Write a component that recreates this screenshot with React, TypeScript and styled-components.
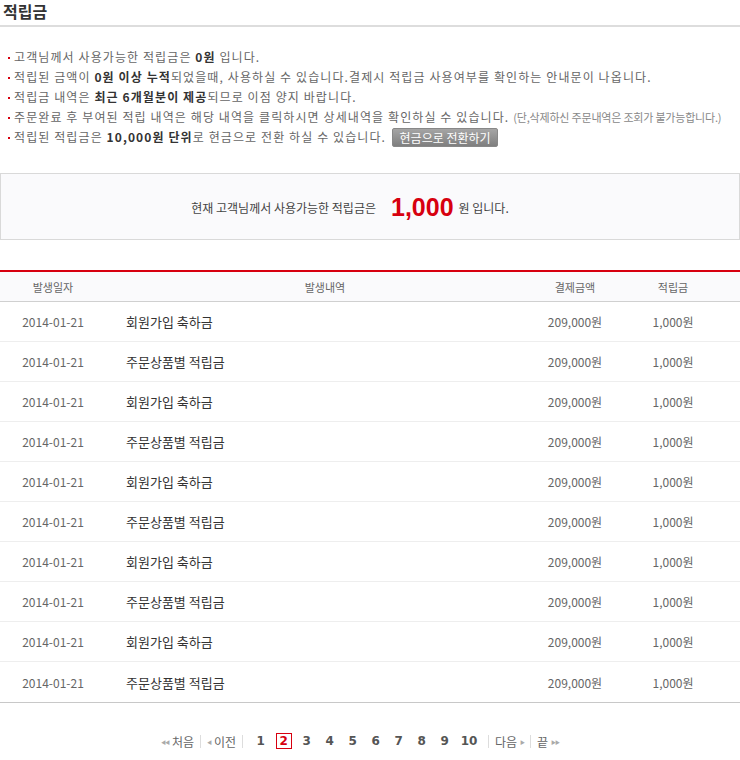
import React from "react";
import styled, { createGlobalStyle } from "styled-components";

const Global = createGlobalStyle`
  html, body { margin: 0; padding: 0; background: #fff; }
  body { font-family: "Noto Sans CJK KR", "Noto Sans", sans-serif; color: #666; }
`;

const Page = styled.div`
  width: 740px;
`;

const Title = styled.h2`
  margin: 0;
  padding: 0 3px;
  height: 25px;
  line-height: 22px;
  font-size: 16px;
  font-weight: 700;
  color: #333;
  border-bottom: 2px solid #ddd;
`;

const Notice = styled.ul`
  list-style: none;
  margin: 20px 0 0;
  padding: 0;
`;

const NoticeItem = styled.li`
  position: relative;
  padding-left: 14px;
  height: 20px;
  line-height: 20px;
  font-size: 12px;
  letter-spacing: 1.1px;
  color: #666;
  white-space: nowrap;
  display: flex;
  align-items: center;
  &::before {
    content: "";
    position: absolute;
    left: 8px;
    top: 10px;
    width: 2px;
    height: 2px;
    background: #d7000f;
  }
  b { color: #333; font-weight: 700; }
`;

const Small = styled.span`
  font-size: 11px;
  letter-spacing: -0.2px;
  margin-left: 4px;
  color: #888;
`;

const ConvertButton = styled.button`
  margin-left: 6px;
  height: 19px;
  width: 106px;
  padding: 0;
  border: 1px solid #888;
  border-radius: 2px;
  background: linear-gradient(#a5a5a5, #7f7f7f);
  color: #fff;
  font-family: inherit;
  font-size: 12px;
  letter-spacing: 0;
  line-height: 17px;
  cursor: pointer;
`;

const Summary = styled.div`
  margin-top: 26px;
  height: 63px;
  padding: 2px 40px 0 0;
  border: 1px solid #d9d9d9;
  background: #fafafc;
  display: flex;
  align-items: center;
  justify-content: center;
  font-size: 12px;
  color: #444;
`;

const Points = styled.strong`
  font-size: 25px;
  font-weight: 700;
  color: #d7000f;
  margin: 0 5px 0 15px;
  letter-spacing: 0;
  font-family: "Liberation Sans", "Noto Sans", sans-serif;
`;

const Table = styled.div`
  margin-top: 30px;
  border-top: 2px solid #d7000f;
  border-bottom: 1px solid #c8c8c8;
`;

const Row = styled.div<{ $head?: boolean }>`
  display: grid;
  grid-template-columns: 106px 438px 62px 134px;
  align-items: center;
  height: ${(p) => (p.$head ? "29px" : "39px")};
  background: ${(p) => (p.$head ? "#fafafc" : "#fff")};
  border-bottom: 1px solid ${(p) => (p.$head ? "#d0d0d0" : "#eee")};
  &:last-child { border-bottom: none; height: 40px; }
`;

const Cell = styled.div<{ $left?: boolean; $head?: boolean; $dark?: boolean }>`
  text-align: ${(p) => (p.$left ? "left" : "center")};
  padding-left: ${(p) => (p.$left ? "20px" : "0")};
  font-size: ${(p) => (p.$head ? "11px" : p.$dark ? "13px" : "12px")};
  color: ${(p) => (p.$dark ? "#333" : "#666")};
  white-space: nowrap;
`;

const Pager = styled.nav`
  display: flex;
  align-items: center;
  justify-content: center;
  height: 16px;
  margin-top: 30px;
  padding-right: 20px;
  font-size: 12px;
  color: #666;
`;

const PagerLink = styled.span`
  display: inline-flex;
  align-items: center;
  gap: 3px;
  color: #666;
`;

const Arrow = styled.span`
  font-size: 5px;
  letter-spacing: -1px;
  color: #aaa;
`;

const Sep = styled.span`
  width: 1px;
  height: 13px;
  background: #ddd;
  margin: 0 6px;
`;

const Num = styled.span<{ $on?: boolean }>`
  display: inline-block;
  min-width: 14px;
  height: 14px;
  line-height: 14px;
  text-align: center;
  margin: 0 3.5px;
  font-family: "DejaVu Sans", "Liberation Sans", sans-serif;
  font-weight: 700;
  font-size: 12px;
  color: ${(p) => (p.$on ? "#d7000f" : "#555")};
  border: 1px solid ${(p) => (p.$on ? "#d7000f" : "transparent")};
`;

const rows = Array.from({ length: 10 }, (_, i) => ({
  date: "2014-01-21",
  desc: i % 2 === 0 ? "회원가입 축하금" : "주문상품별 적립금",
  amount: "209,000원",
  point: "1,000원",
}));

export default function App() {
  return (
    <Page>
      <Global />
      <Title>적립금</Title>
      <Notice>
        <NoticeItem>고객님께서 사용가능한 적립금은&nbsp;<b>0원</b>&nbsp;입니다.</NoticeItem>
        <NoticeItem>
          적립된 금액이&nbsp;<b>0원 이상 누적</b>되었을때, 사용하실 수 있습니다.결제시 적립금 사용여부를 확인하는 안내문이 나옵니다.
        </NoticeItem>
        <NoticeItem>
          적립금 내역은&nbsp;<b>최근 6개월분이 제공</b>되므로 이점 양지 바랍니다.
        </NoticeItem>
        <NoticeItem>
          주문완료 후 부여된 적립 내역은 해당 내역을 클릭하시면 상세내역을 확인하실 수 있습니다.
          <Small>(단,삭제하신 주문내역은 조회가 불가능합니다.)</Small>
        </NoticeItem>
        <NoticeItem>
          적립된 적립금은&nbsp;<b>10,000원 단위</b>로 현금으로 전환 하실 수 있습니다.
          <ConvertButton type="button">현금으로 전환하기</ConvertButton>
        </NoticeItem>
      </Notice>

      <Summary>
        현재 고객님께서 사용가능한 적립금은
        <Points>1,000</Points>원 입니다.
      </Summary>

      <Table>
        <Row $head>
          <Cell $head>발생일자</Cell>
          <Cell $head>발생내역</Cell>
          <Cell $head>결제금액</Cell>
          <Cell $head>적립금</Cell>
        </Row>
        {rows.map((r, i) => (
          <Row key={i}>
            <Cell>{r.date}</Cell>
            <Cell $left $dark>{r.desc}</Cell>
            <Cell>{r.amount}</Cell>
            <Cell>{r.point}</Cell>
          </Row>
        ))}
      </Table>

      <Pager>
        <PagerLink><Arrow>◀◀</Arrow>처음</PagerLink>
        <Sep />
        <PagerLink><Arrow>◀</Arrow>이전</PagerLink>
        <Sep />
        {[1, 2, 3, 4, 5, 6, 7, 8, 9, 10].map((n) => (
          <Num key={n} $on={n === 2}>{n}</Num>
        ))}
        <Sep />
        <PagerLink>다음<Arrow>▶</Arrow></PagerLink>
        <Sep />
        <PagerLink>끝<Arrow>▶▶</Arrow></PagerLink>
      </Pager>
    </Page>
  );
}
